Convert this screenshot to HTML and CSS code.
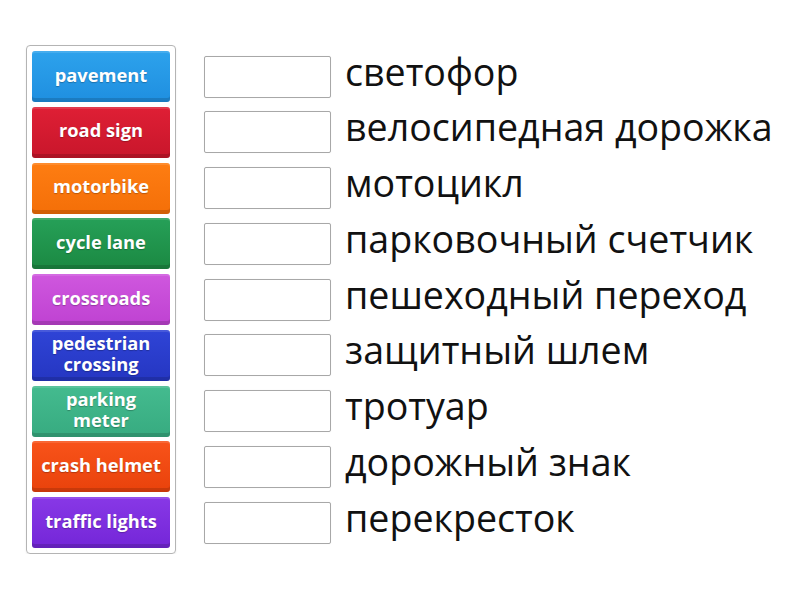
FILE: index.html
```html
<!DOCTYPE html>
<html>
<head>
<meta charset="utf-8">
<link rel="stylesheet" href="styles.css">
</head>
<body>
<div class="page">
  <div class="panel">
    <div class="tile blue">pavement</div>
    <div class="tile red">road sign</div>
    <div class="tile orange">motorbike</div>
    <div class="tile green">cycle lane</div>
    <div class="tile pink">crossroads</div>
    <div class="tile navy two">pedestrian crossing</div>
    <div class="tile teal two">parking meter</div>
    <div class="tile vermilion">crash helmet</div>
    <div class="tile purple">traffic lights</div>
  </div>
  <div class="answers">
    <div class="row"><div class="slot"></div><div class="word">светофор</div></div>
    <div class="row"><div class="slot"></div><div class="word">велосипедная дорожка</div></div>
    <div class="row"><div class="slot"></div><div class="word">мотоцикл</div></div>
    <div class="row"><div class="slot"></div><div class="word">парковочный счетчик</div></div>
    <div class="row"><div class="slot"></div><div class="word">пешеходный переход</div></div>
    <div class="row"><div class="slot"></div><div class="word">защитный шлем</div></div>
    <div class="row"><div class="slot"></div><div class="word">тротуар</div></div>
    <div class="row"><div class="slot"></div><div class="word">дорожный знак</div></div>
    <div class="row"><div class="slot"></div><div class="word">перекресток</div></div>
  </div>
</div>
</body>
</html>
```
FILE: styles.css
```css
html, body {
  margin: 0;
  padding: 0;
  background: #ffffff;
}
body {
  font-family: "Open Sans", "Liberation Sans", sans-serif;
}
.page {
  display: flex;
  align-items: flex-start;
  padding: 45px 0 0 26px;
  gap: 28px;
}
.panel {
  width: 138px;
  border: 1px solid #b4b4b4;
  border-radius: 4px;
  padding: 5px;
  display: flex;
  flex-direction: column;
  gap: 4.75px;
  box-shadow: 0 1px 2px rgba(0,0,0,0.08);
}
.tile {
  height: 51px;
  box-sizing: border-box;
  padding-bottom: 4px;
  border-radius: 3px;
  display: flex;
  align-items: center;
  justify-content: center;
  text-align: center;
  color: #ffffff;
  font-weight: 700;
  font-size: 18.3px;
  line-height: 20px;
  text-shadow: 0 1px 1px rgba(0,0,0,0.25);
  box-shadow: inset 0 -4px 0 rgba(0,0,0,0.14), inset 0 2px 0 rgba(255,255,255,0.12);
}
.tile.two {
  padding: 0 6px 4px;
  line-height: 21px;
}
.blue { background: linear-gradient(#2da2ec, #1f8fe0); }
.red { background: linear-gradient(#df1f35, #c8162b); }
.orange { background: linear-gradient(#fe7d12, #f46f08); }
.green { background: linear-gradient(#26a058, #1b8942); }
.pink { background: linear-gradient(#cf57de, #bf42d2); }
.navy { background: linear-gradient(#2f44d6, #2536c2); }
.teal { background: linear-gradient(#44bb8f, #37ab80); }
.vermilion { background: linear-gradient(#f8531a, #e9420b); }
.purple { background: linear-gradient(#8838e6, #7426d8); }
.answers {
  display: flex;
  flex-direction: column;
  gap: 4.75px;
  padding-top: 6px;
}
.row {
  height: 51px;
  display: flex;
  align-items: center;
  gap: 14px;
}
.slot {
  width: 125px;
  height: 40px;
  border: 1px solid #a8a8a8;
  border-radius: 2px;
  background: #fff;
  box-shadow: 0 0 1px rgba(0,0,0,0.1);
}
.word {
  font-size: 37.6px;
  color: #111111;
  line-height: 40px;
  padding-bottom: 10px;
  white-space: nowrap;
}
```
